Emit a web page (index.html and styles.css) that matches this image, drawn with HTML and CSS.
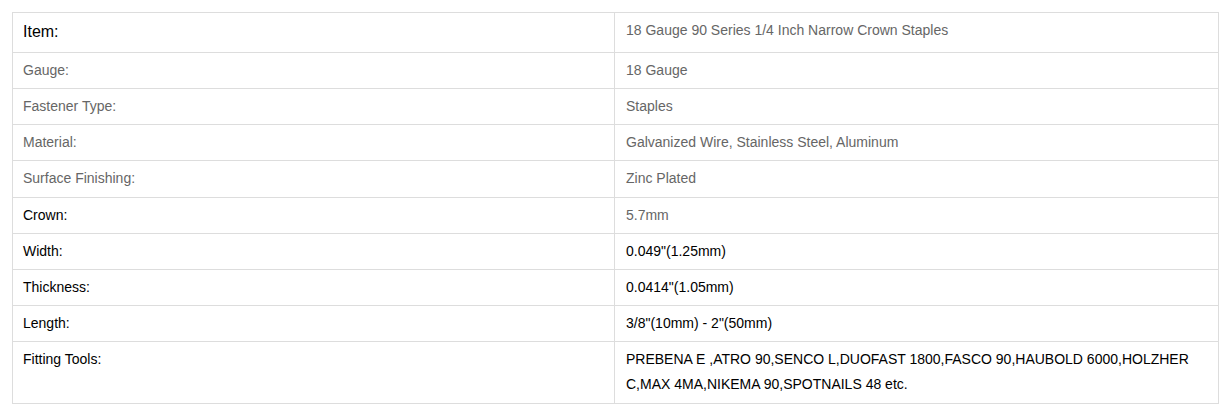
FILE: index.html
```html
<!DOCTYPE html>
<html lang="en">
<head>
<meta charset="utf-8">
<title>Staples specification</title>
<link rel="stylesheet" href="styles.css">
</head>
<body>
<div class="wrap">
<table class="spec">
  <colgroup>
    <col class="col-label">
    <col class="col-value">
  </colgroup>
  <tbody>
    <tr>
      <td class="label item">Item:</td>
      <td class="value muted">18 Gauge 90 Series 1/4 Inch Narrow Crown Staples</td>
    </tr>
    <tr>
      <td class="label muted">Gauge:</td>
      <td class="value muted">18 Gauge</td>
    </tr>
    <tr>
      <td class="label muted">Fastener Type:</td>
      <td class="value muted">Staples</td>
    </tr>
    <tr>
      <td class="label muted">Material:</td>
      <td class="value muted">Galvanized Wire, Stainless Steel, Aluminum</td>
    </tr>
    <tr>
      <td class="label muted">Surface Finishing:</td>
      <td class="value muted">Zinc Plated</td>
    </tr>
    <tr>
      <td class="label dark">Crown:</td>
      <td class="value muted">5.7mm</td>
    </tr>
    <tr>
      <td class="label dark">Width:</td>
      <td class="value dark">0.049"(1.25mm)</td>
    </tr>
    <tr>
      <td class="label dark">Thickness:</td>
      <td class="value dark">0.0414"(1.05mm)</td>
    </tr>
    <tr>
      <td class="label dark">Length:</td>
      <td class="value dark">3/8"(10mm) - 2"(50mm)</td>
    </tr>
    <tr>
      <td class="label dark">Fitting Tools:</td>
      <td class="value dark">PREBENA E ,ATRO 90,SENCO L,DUOFAST 1800,FASCO 90,HAUBOLD 6000,HOLZHER<br>C,MAX 4MA,NIKEMA 90,SPOTNAILS 48 etc.</td>
    </tr>
  </tbody>
</table>
</div>
</body>
</html>
```

FILE: styles.css
```css
html, body {
  margin: 0;
  padding: 0;
  background: #ffffff;
}

body {
  font-family: "Liberation Sans", Arial, sans-serif;
  font-size: 14px;
}

.wrap {
  padding: 12px 14px 0 12px;
}

.spec {
  width: 1206px;
  border-collapse: collapse;
  table-layout: fixed;
}

.col-label {
  width: 602px;
}

.col-value {
  width: 604px;
}

.spec td {
  border: 1px solid #dddddd;
  padding: 5px 10px;
  line-height: 1.8;
  vertical-align: top;
}

.spec .value {
  padding-left: 11px;
}

.spec .item {
  font-size: 16px;
  color: #000000;
}

.spec .muted {
  color: #666666;
}

.spec .dark {
  color: #000000;
}
```
